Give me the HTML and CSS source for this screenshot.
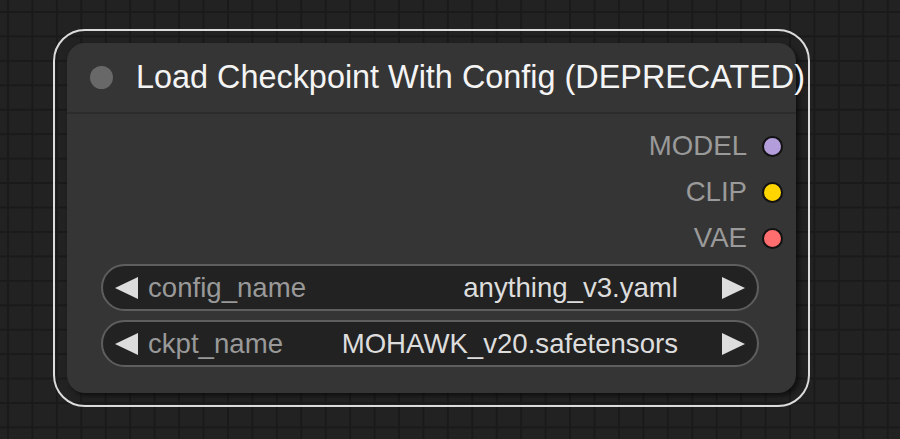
FILE: index.html
```html
<!DOCTYPE html>
<html lang="en">

<head>
  <meta charset="UTF-8">
  <meta name="viewport" content="width=device-width, initial-scale=1.0">
  <title>Load Checkpoint With Config</title>

  <link rel="stylesheet" href="styles.css">
</head>

<body>
  <main class="canvas">
    <div class="selection">
      <section class="node">
        <header class="node-title">
          <span class="title-dot"></span>
          <span class="title-text">Load Checkpoint With Config (DEPRECATED)</span>
        </header>

        <div class="outputs">
          <div class="slot">
            <span class="slot-label">MODEL</span>
            <span class="slot-dot model"></span>
          </div>
          <div class="slot">
            <span class="slot-label">CLIP</span>
            <span class="slot-dot clip"></span>
          </div>
          <div class="slot">
            <span class="slot-label">VAE</span>
            <span class="slot-dot vae"></span>
          </div>
        </div>

        <div class="widgets">
          <div class="combo">
            <svg class="arrow" viewBox="0 0 23 22"><polygon points="0,11 23,0 23,22" /></svg>
            <span class="combo-label">config_name</span>
            <span class="combo-value">anything_v3.yaml</span>
            <svg class="arrow" viewBox="0 0 23 22"><polygon points="23,11 0,0 0,22" /></svg>
          </div>
          <div class="combo">
            <svg class="arrow" viewBox="0 0 23 22"><polygon points="0,11 23,0 23,22" /></svg>
            <span class="combo-label">ckpt_name</span>
            <span class="combo-value">MOHAWK_v20.safetensors</span>
            <svg class="arrow" viewBox="0 0 23 22"><polygon points="23,11 0,0 0,22" /></svg>
          </div>
        </div>
      </section>
    </div>
  </main>
</body>

</html>
```

FILE: styles.css
```css
html,
body {
  height: 100%;
  margin: 0;
}

body {
  background-color: #222;
  background-image:
    linear-gradient(to right, #1a1a1a 2px, transparent 2px),
    linear-gradient(to bottom, #1a1a1a 2px, transparent 2px);
  background-position: 7px 11px;
  background-size: 24.45px 24.45px;
  font-family: "Liberation Sans", Arial, sans-serif;
  overflow: hidden;
}

.canvas {
  padding: 29px 0 0 53px;
}

.selection {
  border: 2px solid #dcdcdc;
  border-radius: 32px;
  padding: 12px;
  width: fit-content;
}

.node {
  background: #353535;
  border-radius: 18px;
  box-shadow: 3px 3px 5px rgba(0, 0, 0, 0.55);
  display: flex;
  flex-direction: column;
  height: 350px;
  width: 729px;
}

.node-title {
  align-items: center;
  border-bottom: 2px solid #2c2c2c;
  box-sizing: border-box;
  column-gap: 23px;
  display: flex;
  height: 71px;
  padding-left: 23px;
}

.title-dot {
  background: #686868;
  border-radius: 50%;
  flex: none;
  height: 23px;
  width: 23px;
}

.title-text {
  color: #f4f4f4;
  font-size: 32.4px;
  white-space: nowrap;
}

.outputs {
  padding: 9px 13px 0 0;
}

.slot {
  align-items: center;
  column-gap: 15px;
  display: flex;
  height: 46px;
  justify-content: flex-end;
}

.slot-label {
  color: #9a9a9a;
  font-size: 27.6px;
}

.slot-dot {
  border: 2px solid #111;
  border-radius: 50%;
  box-sizing: border-box;
  height: 21px;
  width: 21px;
}

.model {
  background: #b39ddb;
}

.clip {
  background: #ffd500;
}

.vae {
  background: #ff6e6e;
}

.widgets {
  display: flex;
  flex-direction: column;
  padding: 3px 37px 0 34px;
  row-gap: 9px;
}

.combo {
  align-items: center;
  background: #222;
  border: 2px solid #5e5e5e;
  border-radius: 24px;
  box-sizing: border-box;
  display: flex;
  font-size: 27.6px;
  height: 47px;
  padding: 0 12px;
}

.arrow {
  fill: #dddddd;
  flex: none;
  height: 22px;
  width: 23px;
}

.combo-label {
  color: #999;
  margin-left: 10px;
}

.combo-value {
  color: #ddd;
  flex: 1;
  margin-right: 44px;
  text-align: right;
}
```
